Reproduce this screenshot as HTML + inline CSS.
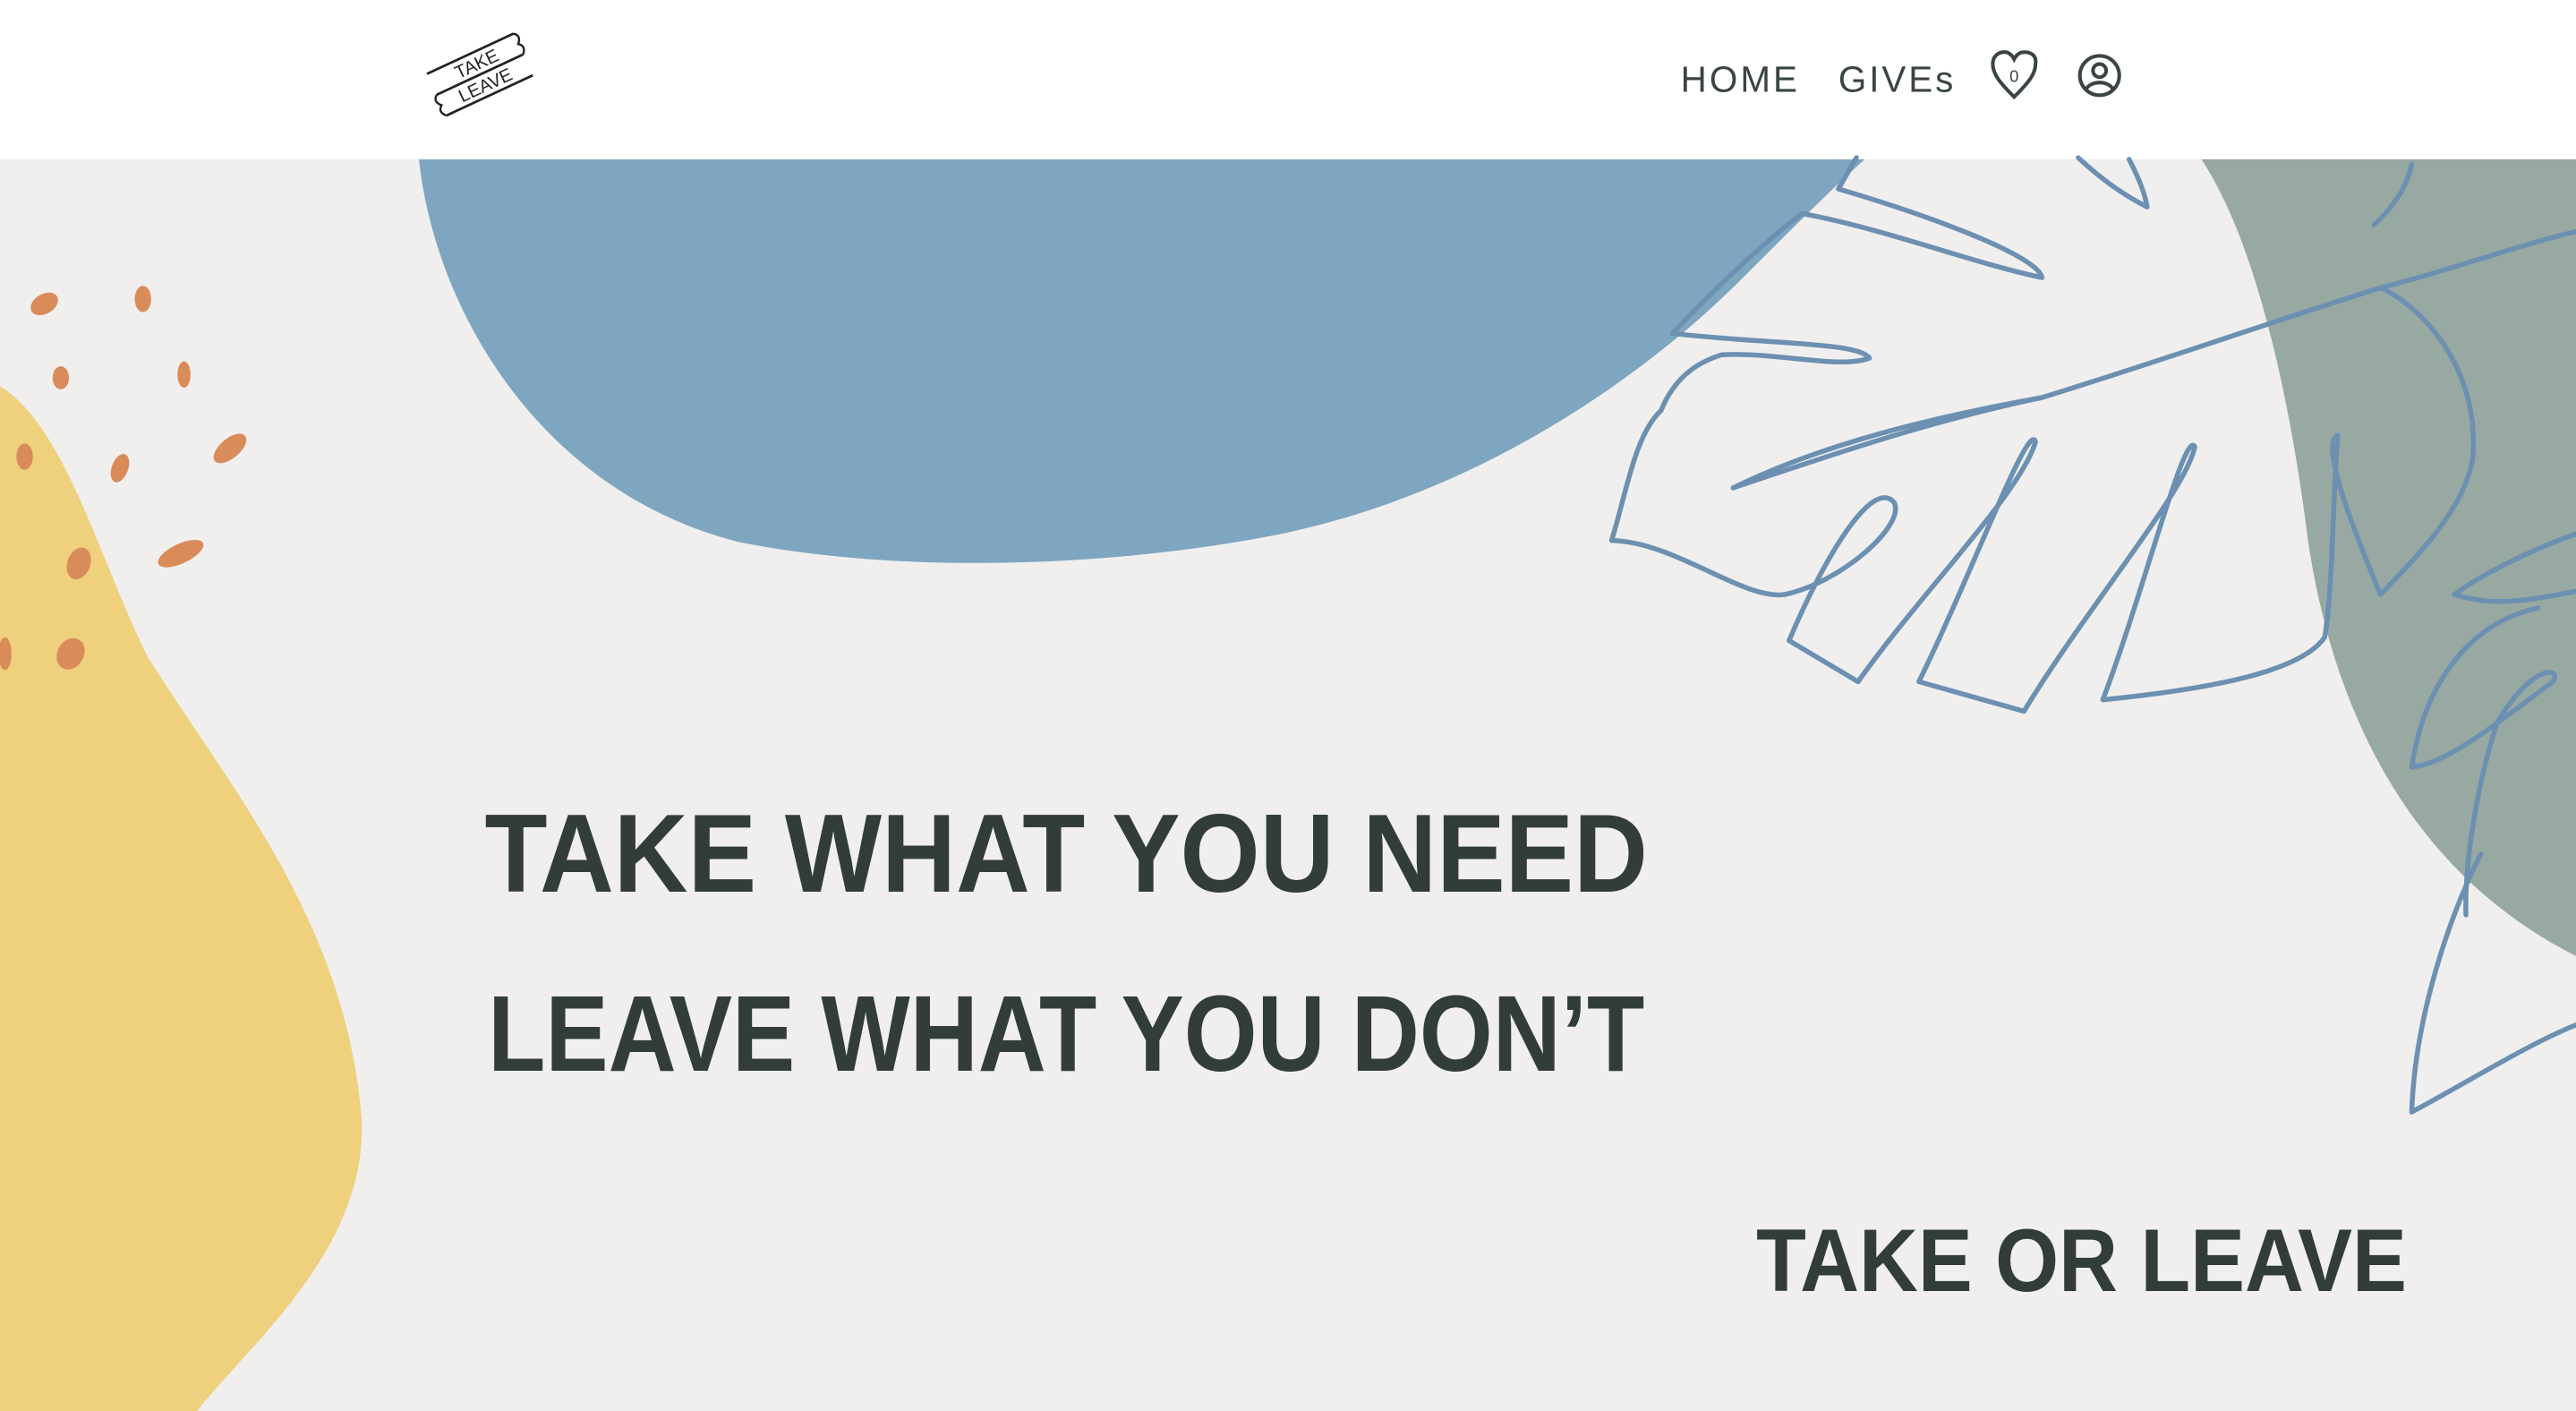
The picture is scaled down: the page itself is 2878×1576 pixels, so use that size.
<!DOCTYPE html>
<html><head><meta charset="utf-8"><style>html,body{margin:0;padding:0;background:#fff;overflow:hidden}svg{display:block}</style></head>
<body>
<svg width="2878" height="1576" viewBox="0 0 1568 859" preserveAspectRatio="none" xmlns="http://www.w3.org/2000/svg">
<rect x="0" y="0" width="1568" height="97" fill="#fff"/>
<rect x="0" y="97" width="1568" height="762" fill="#f0efee"/>
<path d="M255,97 C265,190 330,300 450,330 C550,350 680,345 780,325 C900,300 1000,230 1060,170 C1090,140 1115,115 1135,97 Z" fill="#7fa6c0"/>
<path d="M1340,97 C1375,150 1395,250 1405,330 C1420,430 1465,530 1568,582 L1568,97 Z" fill="#98a9a1"/>
<path d="M0,235 C40,260 60,340 90,400 C140,480 210,560 220,680 C225,760 150,820 120,859 L0,859 Z" fill="#efd07c"/>
<g fill="#d98c5a">
<ellipse cx="27" cy="185" rx="9" ry="6" transform="rotate(-30 27 185)"/>
<ellipse cx="87" cy="182" rx="5" ry="8"/>
<ellipse cx="37" cy="230" rx="5" ry="7"/>
<ellipse cx="112" cy="228" rx="4" ry="8"/>
<ellipse cx="140" cy="273" rx="12" ry="6" transform="rotate(-40 140 273)"/>
<ellipse cx="15" cy="278" rx="5" ry="8"/>
<ellipse cx="73" cy="285" rx="5" ry="9" transform="rotate(20 73 285)"/>
<ellipse cx="110" cy="337" rx="15" ry="6" transform="rotate(-25 110 337)"/>
<ellipse cx="48" cy="343" rx="7" ry="10" transform="rotate(20 48 343)"/>
<ellipse cx="43" cy="398" rx="8" ry="10" transform="rotate(30 43 398)"/>
<ellipse cx="3" cy="398" rx="4" ry="10"/>
</g>
<g fill="none" stroke="#6c90b1" stroke-width="3" stroke-linecap="round" stroke-linejoin="round">
<path d="M1055,297 C1120,275 1180,255 1243,242 C1330,215 1400,190 1450,175 C1490,165 1530,150 1568,141"/>
<path d="M1055,297 C1120,265 1200,250 1243,242"/>
<path d="M981,329 C990,300 995,265 1011,250 C1020,228 1035,220 1048,216 C1080,214 1120,225 1138,218 C1130,208 1080,210 1018,203 C1040,180 1070,150 1097,130 C1150,140 1200,160 1243,169 C1240,155 1170,130 1119,115 L1130,96"/>
<path d="M981,329 C1020,330 1060,365 1086,362 C1120,355 1160,320 1153,306 C1140,290 1110,340 1089,390 L1131,415 C1170,360 1230,300 1239,269 C1235,255 1200,350 1168,415 L1232,433 C1270,370 1330,300 1336,272 C1330,260 1305,360 1280,426 C1340,420 1400,410 1415,388 C1420,360 1420,300 1423,265 C1410,270 1440,340 1449,362 C1470,340 1500,310 1505,280 C1510,230 1480,190 1449,175"/>
<path d="M1568,325 C1540,335 1510,350 1494,362 C1520,370 1540,365 1568,360 M1545,370 C1500,380 1475,420 1468,467 C1490,465 1520,440 1554,415 C1560,405 1540,405 1520,440 C1510,470 1500,520 1501,557 M1510,520 C1490,560 1470,620 1468,677 C1500,660 1540,635 1568,624"/>
<path d="M1265,96 C1280,110 1295,120 1307,126 C1305,115 1300,105 1296,97"/>
<path d="M1468,100 C1465,115 1455,128 1445,137"/>
</g>
<g font-family="Liberation Sans, sans-serif" font-weight="bold" fill="#323d3b">
<text x="295" y="543" font-size="68" textLength="708" lengthAdjust="spacingAndGlyphs">TAKE WHAT YOU NEED</text>
<text x="297" y="652" font-size="66" textLength="704" lengthAdjust="spacingAndGlyphs">LEAVE WHAT YOU DON’T</text>
<text x="1069" y="786" font-size="54" textLength="396" lengthAdjust="spacingAndGlyphs">TAKE OR LEAVE</text>
</g>
<g font-family="Liberation Sans, sans-serif" fill="#3a4443" font-size="22">
<text x="1023" y="56" textLength="71" lengthAdjust="spacing">HOME</text>
<text x="1119" y="56" textLength="70" lengthAdjust="spacing">GIVEs</text>
</g>
<g fill="none" stroke="#3a4443" stroke-width="2.2">
<path d="M1226,59 C1217,50 1213,45 1213,39 C1213,33 1218,31 1222,32 C1224,33 1225,34 1226,36 C1227,34 1228,33 1230,32 C1235,31 1240,33 1239,39 C1239,45 1235,50 1226,59 Z"/>
<circle cx="1278" cy="46" r="12"/>
<circle cx="1278" cy="43" r="4"/>
<path d="M1270,54 C1273,49 1283,49 1286,54"/>
</g>
<text x="1226" y="50" font-family="Liberation Sans, sans-serif" font-size="10" fill="#3a4443" text-anchor="middle">0</text>
<g transform="translate(293,45) rotate(-25)" font-family="Liberation Sans, sans-serif" fill="#222" font-size="11">
<path d="M-30,-14 L28,-14 M-30,0 L28,0 M-30,14 L28,14" stroke="#222" stroke-width="1.5"/>
<path d="M28,-14 q4,3 0,7 q4,3 0,7 M-30,0 q-4,3 0,7 q-4,3 0,7" stroke="#222" stroke-width="1.3" fill="none"/>
<text x="-14" y="-3">TAKE</text>
<text x="-18" y="11">LEAVE</text>
</g>
</svg>
</body></html>
